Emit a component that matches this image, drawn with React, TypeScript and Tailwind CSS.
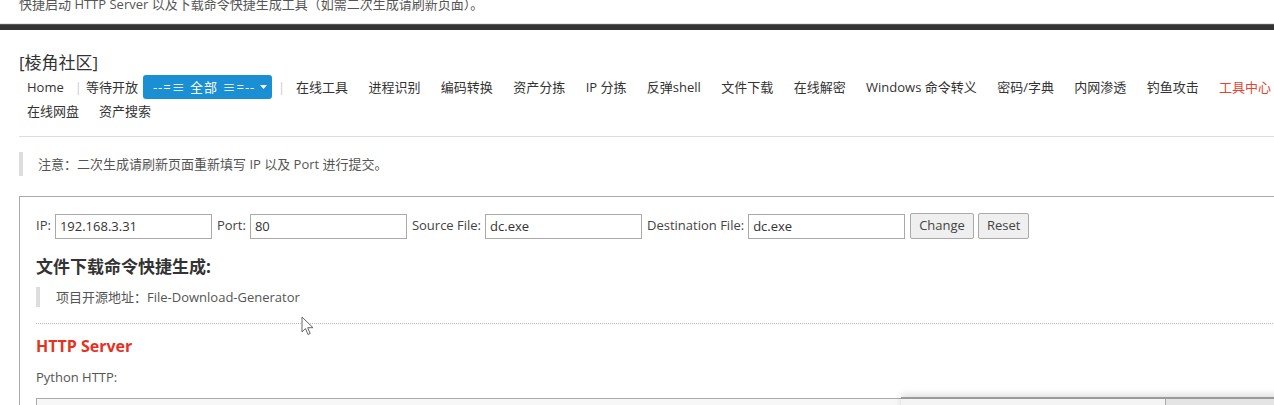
import React from "react";

const font = "font-['Open_Sans','Noto_Sans_CJK_SC',sans-serif]";

const navRow1 = [
  "在线工具",
  "进程识别",
  "编码转换",
  "资产分拣",
  "IP 分拣",
  "反弹shell",
  "文件下载",
  "在线解密",
  "Windows 命令转义",
  "密码/字典",
  "内网渗透",
  "钓鱼攻击",
];

function Field({ label, value }: { label: string; value: string }) {
  return (
    <>
      <span className="mr-[4px] shrink-0">{label}</span>
      <input
        readOnly
        value={value}
        className="w-[157px] shrink-0 h-[25px] border border-[#a9a9a9] px-[4px] text-[13px] text-[#333] outline-none mr-[5px]"
      />
    </>
  );
}

function Btn({ children }: { children: React.ReactNode }) {
  return (
    <button className="shrink-0 h-[26px] px-[8px] mr-[4px] border border-[#aaa] rounded-[2px] bg-[#efefef] text-[13px] text-[#444]">
      {children}
    </button>
  );
}

export default function App() {
  return (
    <div className={`relative w-[1274px] h-[405px] overflow-hidden bg-white text-[#333] ${font}`}>
      {/* page intro, cut at top */}
      <div className="h-[23px] overflow-hidden flex items-end pb-[10px] pl-[19px] text-[13px] leading-[18px] text-[#555] whitespace-nowrap">
        快捷启动 HTTP Server 以及下载命令快捷生成工具（如需二次生成请刷新页面）。
      </div>
      <div className="h-px bg-[#e6e6e6]" />
      <div className="h-[6px] bg-[#333] border-t border-[#555]" />

      <div className="pl-[19px]">
        <div className="mt-[21px] text-[17px] leading-[24px] text-[#333]">[棱角社区]</div>

        {/* nav */}
        <div className="text-[13px] leading-[24px] text-[#333] whitespace-nowrap">
          <div className="flex items-center h-[24px]">
            <span className="shrink-0 pl-[8px] pr-[11px]">Home</span>
            <span className="shrink-0 text-[#ccc]">|</span>
            <span className="shrink-0 pl-[4px]">等待开放</span>
            <span className="shrink-0 ml-[5px] w-[129px] h-[24px] rounded-[3px] bg-[#1b8fd3] text-white flex items-center pl-[10px]">
              <span className="tracking-[1px]">--=≡ 全部 ≡=--</span>
              <svg className="ml-[5px]" width="7" height="4" viewBox="0 0 7 4">
                <path d="M0 0h7L3.5 4z" fill="#fff" />
              </svg>
            </span>
            <span className="shrink-0 ml-[6px] text-[#ccc]">|</span>
            {navRow1.map((n, i) => (
              <span key={n} className={i === 0 ? "shrink-0 pl-[11px] pr-[10.2px]" : "shrink-0 px-[10.2px]"}>
                {n}
              </span>
            ))}
            <span className="shrink-0 px-[10.2px] text-[#e8432e]">工具中心</span>
          </div>
          <div className="flex items-center h-[24px]">
            <span className="pl-[8px] pr-[10px]">在线网盘</span>
            <span className="px-[10px]">资产搜索</span>
          </div>
        </div>

        <div className="mt-[13px] h-px bg-[#ddd]" />

        <div className="mt-[15px] h-[24px] border-l-4 border-[#ddd] pl-[15px] text-[13px] leading-[24px] text-[#555]">
          注意：二次生成请刷新页面重新填写 IP 以及 Port 进行提交。
        </div>

        {/* tool box */}
        <div className="mt-[20px] w-[1290px] border border-r-0 border-[#aaa] pt-[16px] pl-[16px] pb-[20px]">
          <div className="flex items-center text-[13px] text-[#444]">
            <Field label="IP:" value="192.168.3.31" />
            <Field label="Port:" value="80" />
            <Field label="Source File:" value="dc.exe" />
            <Field label="Destination File:" value="dc.exe" />
            <Btn>Change</Btn>
            <Btn>Reset</Btn>
          </div>

          <div className="mt-[14px] text-[17px] leading-[28px] font-bold text-[#333]">文件下载命令快捷生成:</div>

          <div className="mt-[6px] h-[20px] border-l-4 border-[#ddd] pl-[16px] text-[13px] leading-[20px] text-[#555]">
            项目开源地址：File-Download-Generator
          </div>

          <div className="mt-[16px] border-t border-dotted border-[#bbb]" />

          <div className="mt-[10px] text-[16px] leading-[24px] font-bold text-[#e5321f]">HTTP Server</div>
          <div className="mt-[9px] text-[13px] leading-[20px] text-[#555]">Python HTTP:</div>
          <div className="mt-[11px] h-[40px] border border-[#aaa] bg-[#f7f7f7]" />
        </div>
      </div>

      {/* overlapping window at the bottom right */}
      <div className="absolute left-[901px] top-[397px] w-[380px] h-[20px] flex border-t-2 border-[#9a9a9a] shadow-[0_-3px_6px_rgba(0,0,0,0.12)]">
        <div className="w-[265px] bg-[#f4f4f4] border-r border-[#aaa]" />
        <div className="flex-1 bg-[#e4e4e4]" />
      </div>

      {/* mouse cursor */}
      <svg className="absolute left-[301px] top-[316px]" width="13" height="20" viewBox="0 0 13 20">
        <path d="M1 1v15l3.5-3.5 2.5 6 2.2-1-2.5-5.8H12z" fill="#fff" stroke="#666" strokeWidth="1" />
      </svg>
    </div>
  );
}
